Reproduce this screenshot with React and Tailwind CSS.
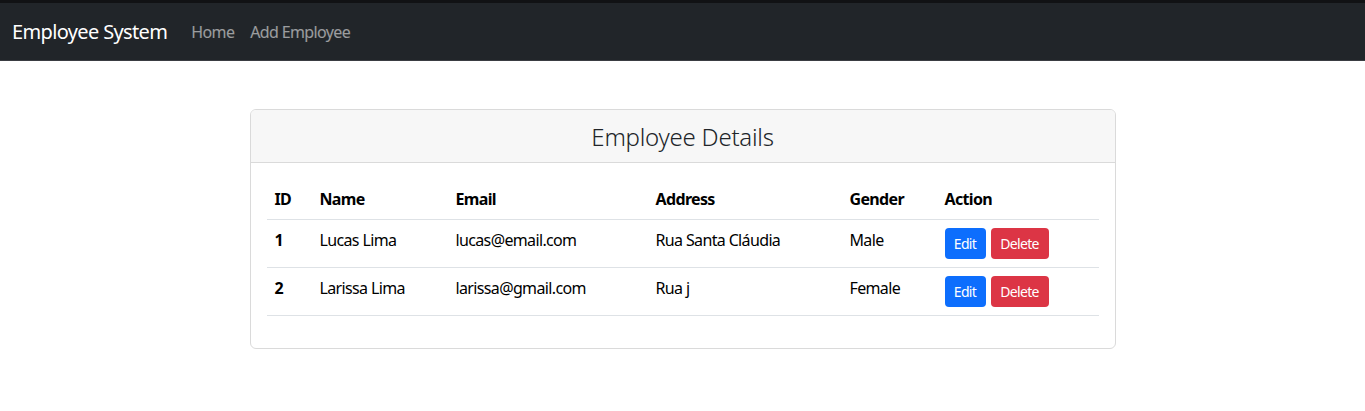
export default function App() {
  const rows = [
    { id: 1, name: "Lucas Lima", email: "lucas@email.com", address: "Rua Santa Cláudia", gender: "Male" },
    { id: 2, name: "Larissa Lima", email: "larissa@gmail.com", address: "Rua j", gender: "Female" },
  ];
  return (
    <div className="min-h-[411px] bg-white font-['Noto_Sans',sans-serif] text-[#212529] tracking-[-0.04em]">
      <nav className="h-[61px] border-t-[3px] border-t-[#111214] border-b border-b-[#3a3d42] bg-[#212529] flex items-center pl-3 pt-px">
        <span className="text-white text-[20px] leading-[30px] mr-4">Employee System</span>
        <a className="text-[16px] text-white/55 px-2">Home</a>
        <a className="text-[16px] text-white/55 px-2">Add Employee</a>
      </nav>
      <div className="flex justify-center pt-12">
        <div className="w-[866px] border border-[#dadada] rounded-[6px] overflow-hidden">
          <div className="h-[53px] bg-[#f7f7f7] border-b border-[#dadada] flex items-center justify-center pt-px">
            <h2 className="text-[24px] font-light text-[#212529] tracking-[-0.01em]">Employee Details</h2>
          </div>
          <div className="p-4">
            <table className="w-full mb-4 border-collapse text-[16px] table-fixed">
              <colgroup>
                <col className="w-[45px]" />
                <col className="w-[136px]" />
                <col className="w-[200px]" />
                <col className="w-[194px]" />
                <col className="w-[95px]" />
                <col />
              </colgroup>
              <thead>
                <tr className="border-b border-[#dee2e6]">
                  {["ID", "Name", "Email", "Address", "Gender", "Action"].map((h) => (
                    <th key={h} className="text-left font-bold px-2 py-2 leading-6 text-black">{h}</th>
                  ))}
                </tr>
              </thead>
              <tbody>
                {rows.map((r) => (
                  <tr key={r.id} className="border-b border-[#dee2e6] align-top">
                    <td className="px-2 py-2 leading-6 font-bold text-black">{r.id}</td>
                    <td className="px-2 py-2 leading-6 text-black">{r.name}</td>
                    <td className="px-2 py-2 leading-6 text-black">{r.email}</td>
                    <td className="px-2 py-2 leading-6 text-black">{r.address}</td>
                    <td className="px-2 py-2 leading-6 text-black">{r.gender}</td>
                    <td className="px-2 py-2 leading-6">
                      <div className="flex gap-[5px]">
                        <button className="h-[31px] w-[41px] rounded-[4px] bg-[#0d6efd] text-white text-[14px]">Edit</button>
                        <button className="h-[31px] w-[58px] rounded-[4px] bg-[#dc3545] text-white text-[14px]">Delete</button>
                      </div>
                    </td>
                  </tr>
                ))}
              </tbody>
            </table>
          </div>
        </div>
      </div>
    </div>
  );
}
